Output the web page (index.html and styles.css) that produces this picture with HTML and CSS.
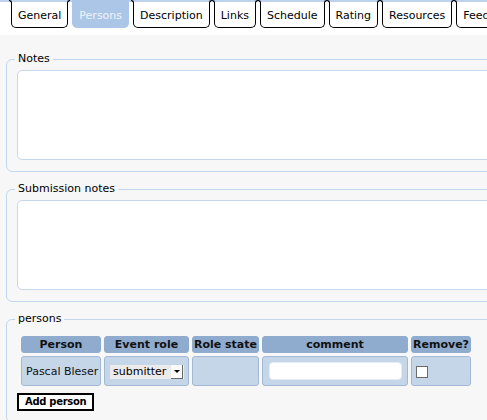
FILE: index.html
```html
<!DOCTYPE html>
<html>
<head>
<meta charset="utf-8">
<link rel="stylesheet" href="styles.css">
</head>
<body>
<div class="tabbar">
  <ul class="tabs">
    <li class="tab">General</li>
    <li class="tab active">Persons</li>
    <li class="tab">Description</li>
    <li class="tab">Links</li>
    <li class="tab">Schedule</li>
    <li class="tab">Rating</li>
    <li class="tab">Resources</li>
    <li class="tab">Feedback</li>
  </ul>
</div>
<div class="panel">
  <fieldset class="group">
    <legend>Notes</legend>
    <textarea class="area"></textarea>
  </fieldset>
  <fieldset class="group">
    <legend>Submission notes</legend>
    <textarea class="area"></textarea>
  </fieldset>
  <fieldset class="group">
    <legend>persons</legend>
    <table class="grid">
      <colgroup>
        <col class="c-person"><col class="c-role"><col class="c-state"><col class="c-comment"><col class="c-remove">
      </colgroup>
      <thead>
        <tr><th>Person</th><th>Event role</th><th>Role state</th><th>comment</th><th>Remove?</th></tr>
      </thead>
      <tbody>
        <tr>
          <td>Pascal Bleser</td>
          <td><div class="select"><span class="sel-val">submitter</span><span class="sel-btn"><span class="tri"></span></span></div></td>
          <td></td>
          <td><input class="comment" type="text"></td>
          <td><input class="check" type="checkbox"></td>
        </tr>
      </tbody>
    </table>
    <button class="add">Add person</button>
  </fieldset>
</div>
</body>
</html>
```

FILE: styles.css
```css
html, body {
  margin: 0;
  overflow: hidden;
  background: #f7f7f7;
}
body {
  font-family: "DejaVu Sans", "Noto Sans", sans-serif;
  font-size: 11px;
  color: #000;
}
.tabbar {
  background: #fff;
  border-top: 2px solid #bcd2ec;
  height: 33px;
}
.tabs {
  list-style: none;
  margin: 0;
  padding: 0 0 0 11px;
  display: flex;
  gap: 4px;
  white-space: nowrap;
}
.tab {
  position: relative;
  flex: none;
  padding: 3px 6px 0;
  line-height: 22px;
  border: 1px solid #000;
  border-top: 0;
  border-radius: 0 0 5px 5px;
  background: #fff;
}
.tab::before,
.tab::after {
  content: "";
  position: absolute;
  top: -2px;
  width: 2px;
  height: 3px;
  border-top: 1px solid #000;
}
.tab::before {
  left: -3px;
  border-right: 1px solid #000;
  border-top-right-radius: 3px;
}
.tab::after {
  right: -3px;
  border-left: 1px solid #000;
  border-top-left-radius: 3px;
}
.tab.active {
  margin-top: -2px;
  padding-top: 5px;
  background: #abc6e7;
  border-color: #abc6e7;
  color: #eef3fa;
}
.tab.active::before,
.tab.active::after {
  display: none;
}
.panel {
  width: 660px;
  padding: 16px 0 0 6px;
}
.group {
  margin: 0 0 9px;
  padding: 3px 10px 11px;
  border: 1px solid #c4d6ec;
  border-radius: 6px;
  width: 620px;
}
.group legend {
  padding: 0 3px;
  margin-left: -2px;
  line-height: 16px;
  font-size: 11px;
}
.area {
  display: block;
  box-sizing: border-box;
  width: 100%;
  height: 90px;
  margin: 0;
  padding: 2px;
  border: 1px solid #c6d8ee;
  border-radius: 5px;
  background: #fff;
  resize: none;
}
.grid {
  border-collapse: separate;
  border-spacing: 3px;
  table-layout: fixed;
  width: 456px;
  margin: 3px 0 0 1px;
}
.c-person { width: 80px; }
.c-role { width: 85px; }
.c-state { width: 67px; }
.c-comment { width: 146px; }
.c-remove { width: 60px; }
.grid th {
  box-sizing: border-box;
  height: 17px;
  padding: 0;
  background: #8fabce;
  border: 1px solid #8fabce;
  border-radius: 3px;
  font-weight: bold;
  font-size: 11px;
  line-height: 15px;
  color: #111;
  text-align: center;
}
.grid td {
  box-sizing: border-box;
  height: 30px;
  padding: 0 4px;
  background: #c6d6e9;
  border: 1px solid #a2b9d6;
  border-radius: 3px;
  vertical-align: middle;
  white-space: nowrap;
  color: #111;
}
.select {
  display: flex;
  width: 74px;
  height: 14px;
  margin-left: 1px;
  margin-top: 2px;
  background: #ebebeb;
  font-size: 11px;
  line-height: 14px;
}
.sel-val {
  flex: 1;
  padding-left: 3px;
  color: #000;
}
.sel-btn {
  box-sizing: border-box;
  width: 12px;
  height: 14px;
  margin-right: 1px;
  background: #fbfbfb;
  border-right: 1px solid #6a6a6a;
  border-bottom: 1px solid #6a6a6a;
  display: flex;
  align-items: center;
  justify-content: center;
}
.tri {
  width: 0;
  height: 0;
  border-left: 3px solid transparent;
  border-right: 3px solid transparent;
  border-top: 3px solid #000;
}
.comment {
  display: block;
  box-sizing: border-box;
  width: 133px;
  height: 18px;
  margin: 0 0 0 2px;
  padding: 0 4px;
  border: 1px solid #e6ecf3;
  border-radius: 4px;
  background: #fff;
}
.check {
  appearance: none;
  display: block;
  box-sizing: border-box;
  width: 12px;
  height: 12px;
  margin: 1px 0 0 0;
  border: 1px solid #6b6b6b;
  background: #fff;
}
.add {
  display: block;
  box-sizing: border-box;
  height: 18px;
  margin: 4px 0 0;
  padding: 0 6px;
  border: 2px solid #000;
  background: #fff;
  font-family: "DejaVu Sans", sans-serif;
  font-weight: bold;
  font-size: 10px;
  letter-spacing: -0.3px;
  line-height: 14px;
  color: #000;
}
```
